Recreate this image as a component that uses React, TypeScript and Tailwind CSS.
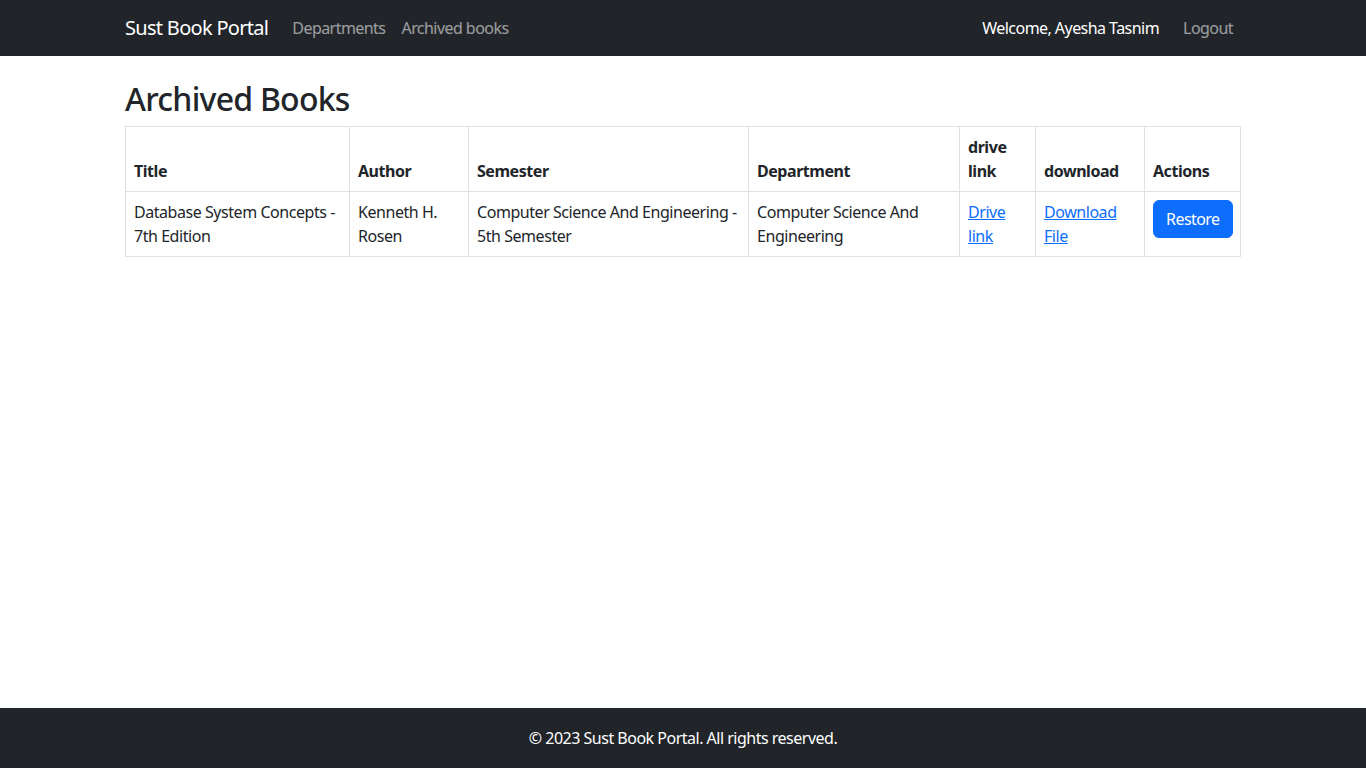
import React from "react";

const font = { fontFamily: '"Noto Sans", "Open Sans", Arial, sans-serif' };

type Book = {
  title: string;
  author: string;
  semester: string;
  department: string;
};

const books: Book[] = [
  {
    title: "Database System Concepts - 7th Edition",
    author: "Kenneth H. Rosen",
    semester: "Computer Science And Engineering - 5th Semester",
    department: "Computer Science And Engineering",
  },
];

function Navbar() {
  return (
    <nav className="bg-[#212529] h-14">
      <div className="mx-auto max-w-[1140px] px-3 h-full flex items-center">
        <a className="text-white text-[20px] mr-4 tracking-[-0.7px]">Sust Book Portal</a>
        <div className="flex text-[16px] text-white/55 tracking-[-0.55px]">
          <a className="px-2">Departments</a>
          <a className="px-2">Archived books</a>
        </div>
        <div className="ml-auto flex items-center text-[16px] tracking-[-0.55px]">
          <span className="text-white mr-4">Welcome, Ayesha Tasnim</span>
          <a className="text-white/55 px-2">Logout</a>
        </div>
      </div>
    </nav>
  );
}

export default function App() {
  const th = "border border-[#dee2e6] p-2 align-bottom text-left font-bold";
  const td = "border border-[#dee2e6] p-2 align-top";
  return (
    <div className="min-h-screen flex flex-col bg-white text-[#212529]" style={font}>
      <Navbar />
      <main className="flex-1">
        <div className="mx-auto max-w-[1140px] px-3 pt-6">
          <h1 className="text-[32px] leading-[1.2] font-medium mb-2 tracking-[-0.75px]">Archived Books</h1>
          <table className="w-full border-collapse table-fixed text-[16px] leading-6 tracking-[-0.45px]">
            <colgroup>
              <col className="w-[224px]" />
              <col className="w-[119px]" />
              <col className="w-[280px]" />
              <col className="w-[211px]" />
              <col className="w-[76px]" />
              <col className="w-[109px]" />
              <col className="w-[96px]" />
            </colgroup>
            <thead>
              <tr>
                <th className={th}>Title</th>
                <th className={th}>Author</th>
                <th className={th}>Semester</th>
                <th className={th}>Department</th>
                <th className={th}>drive link</th>
                <th className={th}>download</th>
                <th className={th}>Actions</th>
              </tr>
            </thead>
            <tbody>
              {books.map((b) => (
                <tr key={b.title}>
                  <td className={td}>{b.title}</td>
                  <td className={td}>{b.author}</td>
                  <td className={td}>{b.semester}</td>
                  <td className={td}>{b.department}</td>
                  <td className={td}>
                    <a className="text-[#0d6efd] underline">Drive link</a>
                  </td>
                  <td className={td}>
                    <a className="text-[#0d6efd] underline">Download File</a>
                  </td>
                  <td className={td}>
                    <button className="bg-[#0d6efd] border border-[#0d6efd] text-white rounded-md px-3 py-1.5 leading-6 tracking-[-0.55px]">
                      Restore
                    </button>
                  </td>
                </tr>
              ))}
            </tbody>
          </table>
        </div>
      </main>
      <footer className="bg-[#212529] h-[60px] flex items-center justify-center text-white text-[16px] tracking-[-0.5px]">
        © 2023 Sust Book Portal. All rights reserved.
      </footer>
    </div>
  );
}
